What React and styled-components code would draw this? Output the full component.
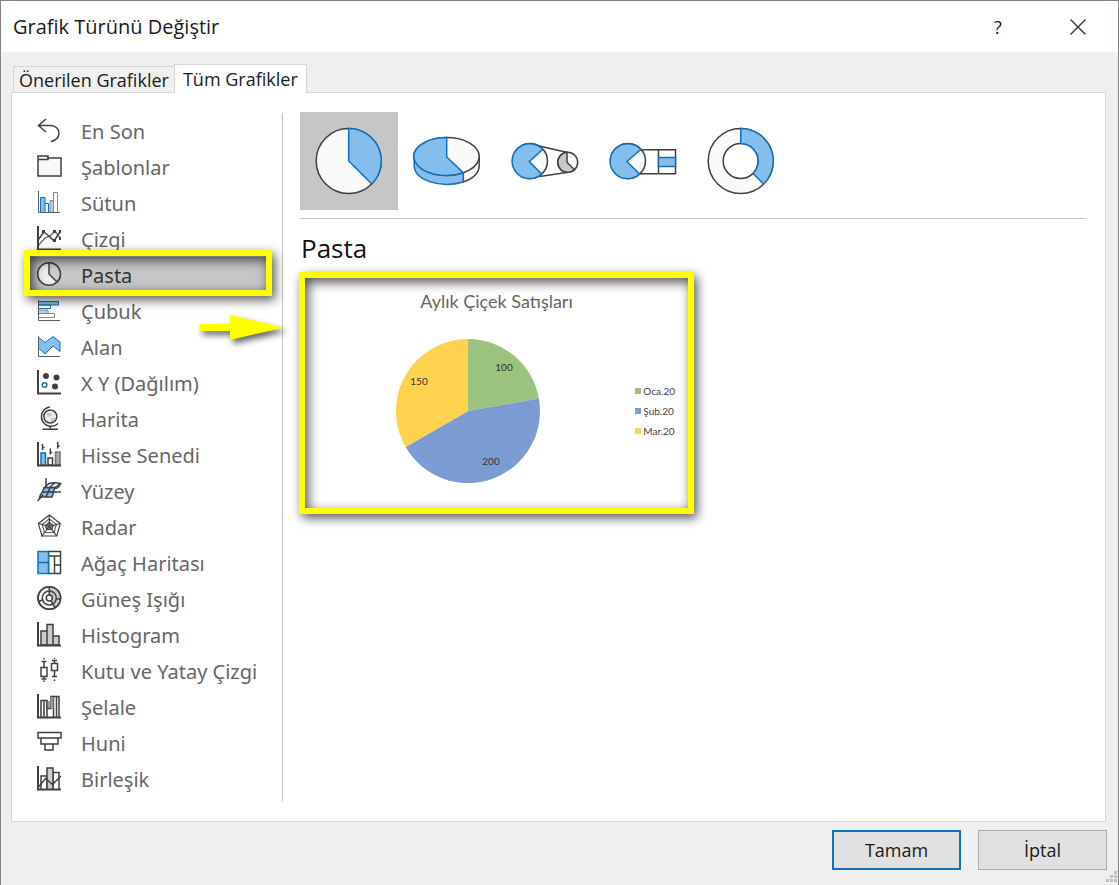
import { useState } from 'react';
import styled, { createGlobalStyle } from 'styled-components';

const GlobalStyle = createGlobalStyle`
  * {
    box-sizing: border-box;
  }

  body {
    margin: 0;
    font-family: 'Open Sans', 'Noto Sans', sans-serif;
    font-size: 18px;
    color: #1a1a1a;
  }

  button {
    font: inherit;
    color: inherit;
    padding: 0;
    border: 0;
    background: none;
  }
`;

const Dialog = styled.div`
  display: flex;
  flex-direction: column;
  min-height: 100vh;
  border: 1px solid #7c8484;
  background: #efefef;
`;

const TitleBar = styled.header`
  display: flex;
  align-items: center;
  height: 51px;
  padding-left: 12px;
  background: #fff;
`;

const Title = styled.h1`
  flex: 1;
  margin: 0;
  font-size: 20px;
  font-weight: 400;
`;

const TitleButton = styled.button`
  display: grid;
  place-items: center;
  width: 80px;
  height: 51px;
`;

const Content = styled.main`
  flex: 1;
  display: flex;
  flex-direction: column;
  padding: 12px 12px 0 10px;
`;

const TabBar = styled.div`
  display: flex;
  align-items: flex-end;
  padding-left: 2px;
`;

const Tab = styled.button`
  height: ${(props) => (props.$active ? 29 : 26)}px;
  padding: 0 ${(props) => (props.$active ? 8 : 5)}px;
  border: 1px solid #d6d6d6;
  border-right-width: ${(props) => (props.$active ? 1 : 0)}px;
  border-bottom: 0;
  background: ${(props) => (props.$active ? '#fff' : '#f0f0f0')};
  line-height: 26px;
  margin-bottom: ${(props) => (props.$active ? -1 : 0)}px;
  z-index: 1;
`;

const Panel = styled.div`
  flex: 1;
  display: flex;
  padding: 19px 19px 20px 12px;
  border: 1px solid #d6d6d6;
  background: #fff;
`;

const Sidebar = styled.nav`
  position: relative;
  width: 259px;
  flex-shrink: 0;
  margin-top: 1px;
  padding: 0 16px 4px 6px;
  border-right: 1px solid #c4c4c4;
`;

const CategoryList = styled.ul`
  margin: 0;
  padding: 0;
  list-style: none;
`;

const highlight = `
  content: '';
  position: absolute;
  border: 6px solid #ff0;
  pointer-events: none;
  box-shadow:
    3px 4px 10px rgba(0, 0, 0, 0.65),
    inset 3px 4px 12px rgba(0, 0, 0, 0.7);
`;

const CategoryButton = styled.button`
  position: relative;
  display: flex;
  align-items: center;
  gap: 19px;
  width: 100%;
  height: 36px;
  padding-left: 6px;
  font-family: 'Noto Sans', 'Open Sans', sans-serif;
  font-size: 20px;
  color: #666;
  text-align: left;
  white-space: nowrap;

  &[aria-current='true'] {
    color: #333;
    background: #c6c6c6;
    z-index: 1;
  }

  &[aria-current='true']::after {
    ${highlight}
    inset: -7px -6px -3px;
  }
`;

const Icon = styled.svg`
  width: 26px;
  height: 26px;
  flex-shrink: 0;
  fill: none;
  stroke: #404040;
  stroke-width: 1.5;
`;

const Pointer = styled.svg`
  position: absolute;
  top: 201px;
  left: 175px;
  width: 86px;
  height: 27px;
  fill: #ff0;
  filter: drop-shadow(3px 4px 3px rgba(0, 0, 0, 0.6));
`;

const Detail = styled.section`
  flex: 1;
  min-width: 0;
  padding-left: 17px;
`;

const Subtypes = styled.div`
  display: flex;
  padding-bottom: 8px;
  border-bottom: 1px solid #c4c4c4;
`;

const SubtypeButton = styled.button`
  width: 98px;
  height: 98px;
  background: ${(props) => (props.$active ? '#c6c6c6' : 'transparent')};

  svg {
    display: block;
    fill: none;
    stroke: #404040;
    stroke-width: 1.5;
  }
`;

const Heading = styled.h2`
  margin: 12px 0 6px 1px;
  font-size: 26px;
  font-weight: 400;
  line-height: 35px;
  color: #111;
`;

const Preview = styled.figure`
  position: relative;
  display: flex;
  flex-direction: column;
  width: 395px;
  height: 242px;
  margin: 0 0 0 -1px;
  padding: 18px 19px 30px 97px;
  font-family: Lato, 'Open Sans', sans-serif;
  font-size: 10px;
  color: #404040;

  &::after {
    ${highlight}
    inset: 0;
  }
`;

const PreviewTitle = styled.figcaption`
  margin: 0 0 27px -78px;
  font-size: 18px;
  line-height: 22px;
  text-align: center;
  color: #666;
`;

const PreviewBody = styled.div`
  display: flex;
  align-items: center;
  justify-content: space-between;
`;

const PieLabel = styled.text`
  fill: #333;
  text-anchor: middle;
  dominant-baseline: central;
`;

const Legend = styled.ul`
  margin: 0;
  padding: 0;
  list-style: none;
`;

const LegendItem = styled.li`
  display: flex;
  align-items: center;
  gap: 2px;
  line-height: 20px;

  &::before {
    content: '';
    width: 6px;
    height: 6px;
    background: ${(props) => props.$color};
  }
`;

const Footer = styled.footer`
  display: flex;
  justify-content: flex-end;
  align-items: flex-start;
  gap: 17px;
  height: 63px;
  padding: 8px 11px 0;
`;

const FooterButton = styled.button`
  width: 129px;
  height: 40px;
  border: ${(props) => (props.$primary ? '2px solid #0f72bd' : '1px solid #adadad')};
  background: #e1e1e1;
`;

const Grip = styled.svg`
  position: absolute;
  right: 2px;
  bottom: 2px;
  fill: #bfbfbf;
`;

const blue = { fill: '#83beec', stroke: '#1370b8' };

const categories = [
  {
    name: 'En Son',
    icon: <path d="M10 1 2.5 7.5 10 14M2.500 7.500H15a8 8 0 0 1 8 8q0 6-8 8" />,
  },
  {
    name: 'Şablonlar',
    icon: (
      <>
        <path d="M2 2h10v2h13v18H2z" fill="#f8f8f8" />
        <path d="M2 5.5h10V3" />
      </>
    ),
  },
  {
    name: 'Sütun',
    icon: (
      <g strokeWidth="1">
        <path d="M4.5 22V7.500H9V22" {...blue} />
        <path d="M9 13.5h3.500V22" stroke="#1370b8" />
        <path d="M14 22V10.500h3.500V22" fill="#c8c8c8" stroke="#888" />
        <path d="M17.5 22V2.500h4V22" stroke="#888" />
        <path d="M2.5 1v21.500H24" stroke="#4f6070" />
      </g>
    ),
  },
  {
    name: 'Çizgi',
    icon: (
      <>
        <path d="m2 20 7-8 5-2 5-5 5 7" stroke="#777" />
        <path d="m2 14 6-8 5 4 5 5 6-9" />
        <path d="M2 0v23.500h23" strokeWidth="2" />
        <path d="M6 4h3v3H6zM17 13h3v3h-3zM23 4h2v3h-2zM17 4h3v3h-3zM23 11h2v3h-2z" fill="#404040" stroke="none" />
      </>
    ),
  },
  {
    name: 'Pasta',
    icon: (
      <>
        <circle cx="13" cy="12" r="11.3" fill="#eee" />
        <path d="M13 .7V12l8 8A11.300 11.300 0 0 0 13 .7z" fill="#ccc" />
      </>
    ),
  },
  {
    name: 'Çubuk',
    icon: (
      <g strokeWidth="1">
        <path d="M2.5 3.500h20V7h-20z" {...blue} />
        <path d="M2.5 7h12v3.500h-12z" stroke="#1370b8" />
        <path d="M2.5 12H12v3.500H2.500z" fill="#ccc" stroke="#888" />
        <path d="M2.5 15.500h16v4h-16z" stroke="#888" />
        <path d="M2.5 2v20.500H24" stroke="#4f6070" />
      </g>
    ),
  },
  {
    name: 'Alan',
    icon: (
      <g strokeWidth="1">
        <path d="m2.5 3.500 6.500 5 8-6 7 5.500v9.500L17 12l-8 8-6.500-6z" {...blue} />
        <path d="M2.5 2v20.500H24" stroke="#4f6070" />
      </g>
    ),
  },
  {
    name: 'X Y (Dağılım)',
    icon: (
      <>
        <path d="M2 0v23.500h23" strokeWidth="2" />
        <g fill="#404040" stroke="none">
          <circle cx="10" cy="6" r="3" />
          <circle cx="20.5" cy="7.5" r="3" />
          <circle cx="19" cy="16.5" r="3" />
        </g>
        <circle cx="8.5" cy="15" r="2.3" stroke="#1370b8" />
      </>
    ),
  },
  {
    name: 'Harita',
    icon: (
      <>
        <circle cx="14.3" cy="10.5" r="6.5" fill="#eee" />
        <path d="m10 8 4-2 2 3-3 2zM15 13l4-2-1 4-3 1z" fill="#c4c4c4" stroke="none" />
        <path d="M14 1a9.700 9.700 0 1 0 8 16.500M14.300 20v3M6.500 23.300H22" />
      </>
    ),
  },
  {
    name: 'Hisse Senedi',
    icon: (
      <>
        <path d="M5 23V11h4.500v12z" {...blue} />
        <path d="M12 23v-7h4.500v7z" />
        <path d="M19.5 23V10H24v13z" fill="#aaa" stroke="#777" />
        <path d="M6.5 2v6M6.500 5.500h2M14.300 6.500v6M14.300 10.500h2M21.700 0v6.500M21.700 4h2" />
        <path d="M2 0v23.500h23" strokeWidth="2" />
      </>
    ),
  },
  {
    name: 'Yüzey',
    icon: (
      <>
        <path d="M8.5 9.500H19l-3 9.500H3.500z" {...blue} stroke="#404040" />
        <path d="m8.5 9.500 4.500-4q5-1.500 11.500 0L19 9.500z" fill="#f4f4f4" />
        <path d="M10 0v9.500M14 9.500 10 19M6 14h19M7 17l-5.500 6M14 9l4.500-4M19 9.500q1 2 4-1l1.500-3" />
      </>
    ),
  },
  {
    name: 'Radar',
    icon: (
      <g strokeWidth="1.2">
        <path d="m13.3 1 11 8.500L20.700 22H6L2.300 9.500z" />
        <path d="m13.3 5 7 5.500-2.300 8H8.500l-2.300-8z" stroke="#666" />
        <path d="m13.3 8.500 4 3-1.500 4h-5l-1.500-4z" fill="#999" />
        <path d="M13.3 1v11.500m11-3-11 3 7.500 9.500m-7.500-9.500L5.500 22.500m7.800-10-11-3" />
      </g>
    ),
  },
  {
    name: 'Ağaç Haritası',
    icon: (
      <>
        <path d="M12.5 1.500h12v22h-12zM12.500 6h12M18.500 6v17.500M18.500 15h6" fill="#fff" />
        <path d="M2 1.500h10.500v22H2zM2 12.500h10.500" {...blue} />
      </>
    ),
  },
  {
    name: 'Güneş Işığı',
    icon: (
      <>
        <circle cx="13.3" cy="12" r="11.3" fill="#f4f4f4" />
        <path d="M13.3.7a11.300 11.300 0 0 1 6 20.800L13.300 12z" fill="#c8c8c8" stroke="none" />
        <circle cx="13.3" cy="12" r="11.3" />
        <circle cx="13.3" cy="12" r="7" />
        <circle cx="13.3" cy="12" r="3" fill="#fff" />
        <path d="M13.3.7V9M15 15l4 6.500M2.500 15.500l4-1.500M20 13h4.500" />
      </>
    ),
  },
  {
    name: 'Histogram',
    icon: (
      <>
        <path d="M5 23V9h6v14zM17 23v-9h6v9zM11 23V2.500h6V23z" fill="#ccc" />
        <path d="M2 0v23.500h23" strokeWidth="2" />
      </>
    ),
  },
  {
    name: 'Kutu ve Yatay Çizgi',
    icon: (
      <path d="M5 9.500h6v9H5zM8 9.500v-6M5.500 3.500h5M8 18.500V21M5.500 21h5M8 0v1.500M8 22.500V24M15.500 5.500h6v7h-6zM18.500 5.500v-3M16 2.500h5M18.500 12.500v6M16 18.500h5M18.500 21.500V23M18.500 0v1" />
    ),
  },
  {
    name: 'Şelale',
    icon: (
      <>
        <path d="M5 23V6.500h6V23M8 6.500V23M17.500 23V2.500H23V23M20.500 2.500V23" />
        <path d="M11 6.500v8h4v-12h2.500" />
        <path d="M11.5 7h3v7h-3zM15 3h2.500v11H15z" fill="#999" stroke="none" />
        <path d="M2 0v23.500h23" strokeWidth="2" />
      </>
    ),
  },
  {
    name: 'Huni',
    icon: <path d="M2 2.500h23V8H2zM5 8h17v6H5zM9 14h8v6H9z" />,
  },
  {
    name: 'Birleşik',
    icon: (
      <>
        <path d="M5 23V10h6v13M17 23V6.500h6V23" />
        <path d="M11 23V2h6v21" fill="#ccc" />
        <path d="m2.5 21 7-8.500 7 6 8.500-8.500" />
        <path d="M2 0v23.500h23" strokeWidth="2" />
      </>
    ),
  },
];

const subtypes = [
  {
    name: 'Pasta',
    icon: (
      <>
        <circle cx="48.7" cy="49" r="32.5" fill="#fafafa" />
        <path d="M48.7 16.500V49L71.700 72A32.500 32.500 0 0 0 48.700 16.500z" {...blue} />
      </>
    ),
  },
  {
    name: '3-B Pasta',
    icon: (
      <>
        <path d="M65.3 60.700v9.300C75 66.500 81.200 60.500 81.200 53.500v-9z" fill="#fafafa" />
        <path d="M16.2 44.500v9c0 14 25 23.500 49.100 16.500v-9.300z" {...blue} />
        <ellipse cx="48.7" cy="44.5" rx="32.5" ry="19" fill="#fafafa" />
        <path d="M48.7 25.500V45l16.600 15.700A32.500 19 0 1 1 48.700 25.500z" {...blue} />
      </>
    ),
  },
  {
    name: 'Pasta Grafiğin Pastası',
    icon: (
      <>
        <circle cx="34" cy="49" r="17.5" fill="#fafafa" />
        <path d="m41 33.500 30.500 7M43.500 64.500 74 60" />
        <path d="M46.7 37.500A17.500 17.500 0 1 0 45.500 62L33.300 49.500z" {...blue} />
        <circle cx="71.7" cy="50.3" r="10" fill="#fafafa" />
        <path d="M71 40.300v10l7.500 7.500A10 10 0 1 1 71 40.300z" fill="#c8c8c8" />
      </>
    ),
  },
  {
    name: 'Pasta Grafiğin Çubuğu',
    icon: (
      <>
        <circle cx="34" cy="49" r="17.5" fill="#fafafa" />
        <path d="M46 37.700h35.500v24H45.500M64.500 37.700v24" />
        <path d="M64.5 45.500h17v9h-17z" {...blue} />
        <path d="M46.7 37.500A17.500 17.500 0 1 0 45.500 62L33 49.500z" {...blue} />
      </>
    ),
  },
  {
    name: 'Halka',
    icon: (
      <>
        <circle cx="48.7" cy="49" r="32.5" fill="#fafafa" />
        <circle cx="48.7" cy="49" r="17.5" fill="#fff" />
        <path
          d="M48.7 16.500v15A17.500 17.500 0 0 1 61 61.500L71.700 72A32.500 32.500 0 0 0 48.700 16.500z"
          {...blue}
        />
      </>
    ),
  },
];

const sales = [
  { month: 'Oca.20', value: 100, color: '#9bc37f', x: 108, y: 28 },
  { month: 'Şub.20', value: 200, color: '#7d9bd3', x: 95, y: 122 },
  { month: 'Mar.20', value: 150, color: '#ffd24f', x: 23, y: 42 },
];

function Pie({ data, radius }) {
  const total = data.reduce((sum, item) => sum + item.value, 0);
  const point = (share) => {
    const angle = share * 2 * Math.PI;
    return `${radius + radius * Math.sin(angle)} ${radius - radius * Math.cos(angle)}`;
  };

  let sum = 0;
  const slices = data.map((item) => {
    const start = point(sum / total);
    sum += item.value;
    const end = point(sum / total);
    return { ...item, d: `M${radius} ${radius}L${start}A${radius} ${radius} 0 0 1 ${end}z` };
  });

  return (
    <svg width={radius * 2} height={radius * 2}>
      {slices.map((slice) => (
        <path key={slice.month} d={slice.d} fill={slice.color} />
      ))}
      {slices.map((slice) => (
        <PieLabel key={slice.month} x={slice.x} y={slice.y}>
          {slice.value}
        </PieLabel>
      ))}
    </svg>
  );
}

function App() {
  const [category, setCategory] = useState('Pasta');
  const [subtype, setSubtype] = useState('Pasta');

  return (
    <>
      <GlobalStyle />
      <Dialog role="dialog" aria-labelledby="dialog-title">
        <TitleBar>
          <Title id="dialog-title">Grafik Türünü Değiştir</Title>
          <TitleButton>?</TitleButton>
          <TitleButton aria-label="Kapat">
            <svg width="16" height="16" stroke="#333" strokeWidth="1.4">
              <path d="m.5.5 15 15M15.500.5l-15 15" />
            </svg>
          </TitleButton>
        </TitleBar>

        <Content>
          <TabBar role="tablist">
            <Tab role="tab" aria-selected="false">
              Önerilen Grafikler
            </Tab>
            <Tab role="tab" aria-selected="true" $active>
              Tüm Grafikler
            </Tab>
          </TabBar>

          <Panel role="tabpanel">
            <Sidebar>
              <CategoryList>
                {categories.map(({ name, icon }) => (
                  <li key={name}>
                    <CategoryButton
                      aria-current={name === category}
                      onClick={() => setCategory(name)}
                    >
                      <Icon viewBox="0 0 26 26">{icon}</Icon>
                      {name}
                    </CategoryButton>
                  </li>
                ))}
              </CategoryList>
              <Pointer viewBox="0 0 86 27">
                <path d="M3 10h28V1l54 12.500L31 26v-9H3q-3 0-3-3.500T3 10z" />
              </Pointer>
            </Sidebar>

            <Detail>
              <Subtypes>
                {subtypes.map(({ name, icon }) => (
                  <SubtypeButton
                    key={name}
                    aria-label={name}
                    aria-pressed={name === subtype}
                    $active={name === subtype}
                    onClick={() => setSubtype(name)}
                  >
                    <svg width="98" height="98">
                      {icon}
                    </svg>
                  </SubtypeButton>
                ))}
              </Subtypes>

              <Heading>{subtype}</Heading>

              <Preview>
                <PreviewTitle>Aylık Çiçek Satışları</PreviewTitle>
                <PreviewBody>
                  <Pie data={sales} radius={72} />
                  <Legend>
                    {sales.map(({ month, color }) => (
                      <LegendItem key={month} $color={color}>
                        {month}
                      </LegendItem>
                    ))}
                  </Legend>
                </PreviewBody>
              </Preview>
            </Detail>
          </Panel>
        </Content>

        <Footer>
          <FooterButton $primary>Tamam</FooterButton>
          <FooterButton>İptal</FooterButton>
        </Footer>
        <Grip width="12" height="12">
          <path d="M9 0h3v3H9zM5 4h3v3H5zM9 4h3v3H9zM1 8h3v3H1zM5 8h3v3H5zM9 8h3v3H9z" />
        </Grip>
      </Dialog>
    </>
  );
}

export default App;
